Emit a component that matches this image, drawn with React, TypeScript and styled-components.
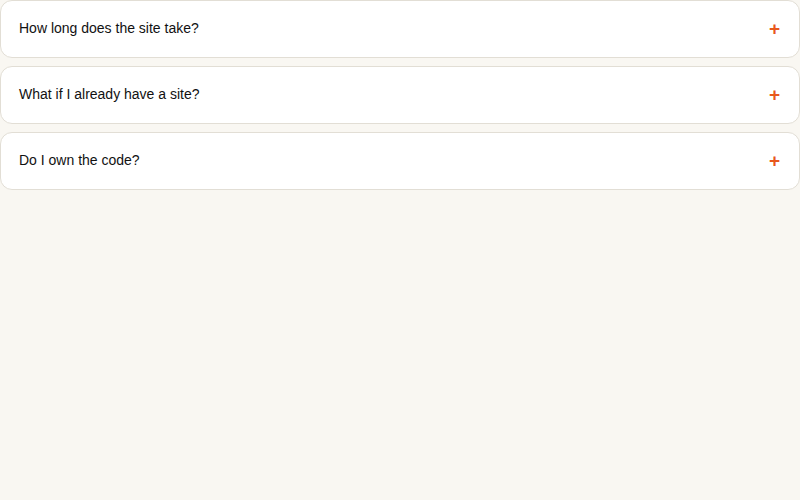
import styled, { createGlobalStyle } from "styled-components";

const GlobalStyle = createGlobalStyle`
    html, body {
        margin: 0;
        padding: 0;
        background: #f9f7f2;
        font-family: "Liberation Sans", Arial, sans-serif;
    }
`;

const questions = [
    "How long does the site take?",
    "What if I already have a site?",
    "Do I own the code?",
];

export default function App() {
    return (
        <>
            <GlobalStyle/>
            <FaqList>
                {questions.map((q) => (
                    <FaqItem key={q}>
                        <Question>{q}</Question>
                        <Plus>+</Plus>
                    </FaqItem>
                ))}
            </FaqList>
        </>
    );
}

const FaqList = styled.div`
    display: flex;
    flex-direction: column;
    gap: 8px;
`;

const FaqItem = styled.button`
    display: flex;
    align-items: center;
    justify-content: space-between;
    box-sizing: border-box;
    width: 100%;
    height: 58px;
    padding: 0 19px 2px 18px;
    background: #ffffff;
    border: 1px solid #e2ded5;
    border-radius: 12px;
    font-family: inherit;
    cursor: pointer;
    text-align: left;
`;

const Question = styled.span`
    font-size: 14px;
    color: #111111;
`;

const Plus = styled.span`
    font-size: 19px;
    font-weight: 600;
    line-height: 1;
    color: #e8581c;
`;
